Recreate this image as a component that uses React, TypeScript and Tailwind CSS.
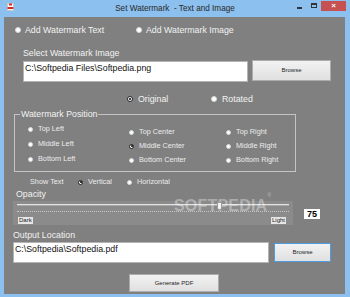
import React from 'react'

const FONT = "font-['Liberation_Sans',Arial,sans-serif]"

function Dot({ checked = false, small = false }: { checked?: boolean; small?: boolean }) {
  return (
    <span
      className={`flex shrink-0 items-center justify-center rounded-full bg-white ${small ? 'w-[5px] h-[5px]' : 'w-[6px] h-[6px]'} ${checked ? 'border border-[#222]' : 'border border-[#d8d8d8]'}`}
    >
      {checked && <span className="w-[2px] h-[2px] rounded-full bg-black" />}
    </span>
  )
}

function Radio({ label, checked = false, className = '' }: { label: string; checked?: boolean; className?: string }) {
  return (
    <div className={`flex items-center gap-[4px] h-[12px] ${className}`}>
      <Dot checked={checked} />
      <span className="text-[8.8px] leading-[12px] text-[#f2f2f2] whitespace-nowrap">{label}</span>
    </div>
  )
}

function SmallRadio({ label, checked = false, className = '' }: { label: string; checked?: boolean; className?: string }) {
  return (
    <div className={`flex items-center gap-[5px] h-[8px] ${className}`}>
      <Dot checked={checked} small />
      <span className="text-[7.3px] leading-[8px] text-[#ececec] whitespace-nowrap">{label}</span>
    </div>
  )
}

function WinButton({ label, focused = false, className = '' }: { label: string; focused?: boolean; className?: string }) {
  return (
    <div
      className={`flex items-center justify-center bg-gradient-to-b from-[#f2f2f2] to-[#e0e0e0] border ${focused ? 'border-[#4d9be0]' : 'border-[#acacac]'} ${className}`}
    >
      <span className="text-[6px] leading-[7px] text-[#1e1e1e]">{label}</span>
    </div>
  )
}

function TextBox({ value, className = '' }: { value: string; className?: string }) {
  return (
    <div className={`bg-white border border-[#b4b4b4] pl-[1px] pt-[1px] text-[8.8px] leading-[10px] text-[#111] whitespace-nowrap ${className}`}>
      {value}
    </div>
  )
}

export default function App() {
  return (
    <div className={`w-[350px] h-[297px] bg-[#8cc0ee] flex flex-col overflow-hidden ${FONT}`}>
      {/* title bar */}
      <div className="h-[17px] grid grid-cols-[1fr_auto_1fr]">
        <div className="flex items-start">
          <svg className="ml-[7px] mt-[3px]" width="7" height="8" viewBox="0 0 7 8">
            <rect x="0.5" y="0.5" width="6" height="7" fill="#ffffff" stroke="#c8c8c8" />
            <rect x="2" y="0.5" width="3" height="2" fill="#d42a2a" />
            <rect x="0.5" y="4" width="6" height="2" fill="#d42a2a" />
          </svg>
        </div>
        <div className="flex items-center">
          <span className="text-[8.2px] leading-[10px] text-[#2a2a2a] whitespace-pre">Set Watermark  - Text and Image</span>
        </div>
        <div className="flex justify-end items-start">
          <div className="mt-[7px] w-[5px] h-[1.5px] bg-[#333]" />
          <div className="mt-[3px] ml-[9px] w-[6px] h-[5px] border border-[#333] border-t-2" />
          <div className="mt-[1px] ml-[4px] mr-[4px] w-[25px] h-[10px] bg-[#c75050] flex items-center justify-center">
            <span className="text-[8px] leading-[8px] font-bold text-white">×</span>
          </div>
        </div>
      </div>

      {/* client area */}
      <div className="ml-[4px] mr-[5px] h-[277px] bg-[#808080] flex flex-col">
        <div className="mt-[7px] flex pl-[11px]">
          <Radio label="Add Watermark Text" className="w-[121px]" />
          <Radio label="Add Watermark Image" />
        </div>

        <div className="mt-[12px] pl-[19px] h-[11px] text-[8.8px] leading-[11px] text-[#f2f2f2]">Select Watermark Image</div>

        <div className="mt-[1px] flex items-start pl-[19px]">
          <TextBox value="C:\Softpedia Files\Softpedia.png" className="mt-[1px] w-[225px] h-[21px]" />
          <WinButton label="Browse" className="ml-[4px] w-[79px] h-[21px]" />
        </div>

        <div className="mt-[11px] flex pl-[123px]">
          <Radio label="Original" checked className="w-[84px] gap-[5px]" />
          <Radio label="Rotated" className="gap-[5px]" />
        </div>

        <div className="mt-[9px] ml-[10px] w-[282px] h-[58px] border border-[#c4c4c4] relative flex">
          <span className="absolute -top-[6px] left-[5px] px-[1px] bg-[#808080] text-[8.8px] leading-[11px] text-[#f2f2f2]">
            Watermark Position
          </span>
          <div className="ml-[13px] w-[101px] pt-[10px] flex flex-col gap-[7px]">
            <SmallRadio label="Top Left" />
            <SmallRadio label="Middle Left" />
            <SmallRadio label="Bottom Left" />
          </div>
          <div className="w-[97px] pt-[13px] flex flex-col gap-[6px]">
            <SmallRadio label="Top Center" />
            <SmallRadio label="Middle Center" checked />
            <SmallRadio label="Bottom Center" />
          </div>
          <div className="pt-[13px] flex flex-col gap-[6px]">
            <SmallRadio label="Top Right" />
            <SmallRadio label="Middle Right" />
            <SmallRadio label="Bottom Right" />
          </div>
        </div>

        <div className="mt-[6px] flex items-center pl-[26px]">
          <span className="w-[48px] text-[7.3px] leading-[8px] text-[#ececec]">Show Text</span>
          <SmallRadio label="Vertical" checked className="w-[49px]" />
          <SmallRadio label="Horizontal" />
        </div>

        <div className="mt-[3px] pl-[12px] h-[11px] text-[8.8px] leading-[11px] text-[#f2f2f2]">Opacity</div>

        <div className="mt-[1px] flex items-start">
          <div className="ml-[9px] w-[280px] h-[24px] bg-[#8b8b8b] relative flex flex-col">
            <span className="absolute -top-[4px] left-[161px] text-[16px] leading-[18px] font-bold text-white/35 tracking-[0.2px] whitespace-nowrap">
              SOFTPEDIA<sup className="text-[5px] align-top">®</sup>
            </span>
            <div className="mx-[4px] mt-[3px] h-[2px] bg-[#e2e2e2] border-b border-[#a8a8a8]" />
            <div className="absolute top-[1px] left-[204px] w-[5px] h-[8px] bg-[#f4f4f4] border border-[#9a9a9a] rounded-b-[2px]" />
            <div className="mx-[4px] mt-[5px] border-t border-dotted border-[#c6c6c6]" />
            <div className="mt-[5px] flex justify-between px-[5px]">
              <span className="h-[7px] px-[1px] bg-[#e6e6e6] text-[6px] leading-[7px] text-[#222]">Dark</span>
              <span className="h-[7px] px-[1px] bg-[#e6e6e6] text-[6px] leading-[7px] text-[#222] mr-[2px]">Light</span>
            </div>
          </div>
          <div className="ml-[11px] mt-[8px] w-[16px] h-[10px] bg-white flex items-center justify-center">
            <span className="text-[9px] leading-[10px] font-bold text-black">75</span>
          </div>
        </div>

        <div className="mt-[5px] pl-[9px] h-[11px] text-[8.8px] leading-[11px] text-[#f2f2f2]">Output Location</div>

        <div className="mt-[1px] flex items-start pl-[9px]">
          <TextBox value="C:\Softpedia\Softpedia.pdf" className="w-[256px] h-[21px]" />
          <WinButton label="Browse" focused className="ml-[5px] mt-[1px] w-[57px] h-[19px]" />
        </div>

        <div className="mt-[11px] pl-[125px]">
          <WinButton label="Generate PDF" className="w-[90px] h-[18px]" />
        </div>
      </div>
    </div>
  )
}
